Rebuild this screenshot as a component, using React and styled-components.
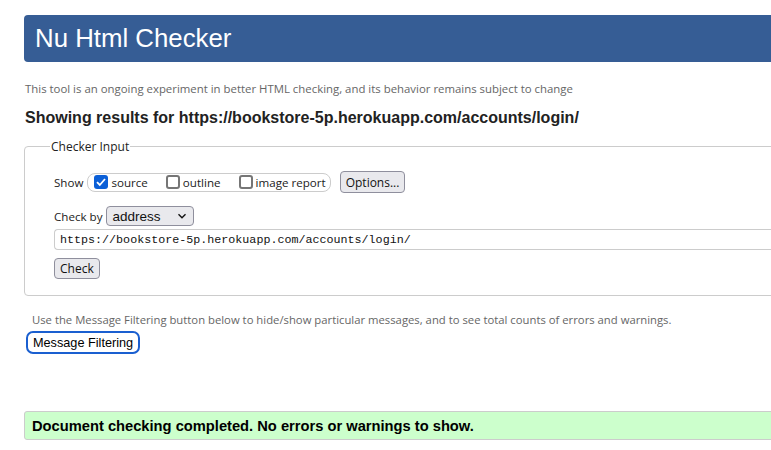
import React from 'react';
import styled, { createGlobalStyle } from 'styled-components';

const Global = createGlobalStyle`
  html, body { margin:0; padding:0; background:#fff; overflow:hidden; }
  body { font-family: "Open Sans", "Noto Sans", sans-serif; }
`

const Page = styled.div`
  width:1000px;
  padding:15px 0 0 24px;
`

const Header = styled.div`
  height:47px;
  background:#365d95;
  border-radius:4px;
  padding-left:11px;
  display:flex;
  align-items:center;
`

const Title = styled.h1`
  margin:0;
  font-family:"Liberation Sans", Arial, sans-serif;
  font-weight:normal;
  font-size:25.8px;
  color:#fff;
`

const Intro = styled.p`
  margin:19px 0 0 1px;
  font-size:11.4px;
  color:#666;
  line-height:16px;
`

const Results = styled.h2`
  margin:11px 0 0 1px;
  font-family:"Liberation Sans", Arial, sans-serif;
  font-size:16px;
  font-weight:bold;
  color:#222;
  line-height:20px;
`

const Fieldset = styled.fieldset`
  margin:10px 0 0 0;
  border:1px solid #ccc;
  border-radius:4px;
  padding:6px 0 16px 29px;
`

const Legend = styled.legend`
  margin-left:-4px;
  padding:0 1px;
  font-size:12px;
  color:#222;
`

const Row = styled.div`
  display:flex;
  align-items:center;
  font-size:11.6px;
  color:#222;
  margin-top:${p => p.$mt || 0}px;
`

const Label = styled.span`
  margin-right:4px;
`

const Group = styled.div`
  display:flex;
  align-items:center;
  height:17px;
  border:1px solid #ccc;
  border-radius:8px;
  padding:0 4px 0 6px;
  margin-right:9px;
`

const Option = styled.label`
  display:flex;
  align-items:center;
  margin-right:${p => p.$gap || 0}px;
`

const Box = styled.span`
  width:14px;
  height:14px;
  box-sizing:border-box;
  border-radius:3px;
  margin-right:3px;
  display:flex;
  align-items:center;
  justify-content:center;
  background:${p => (p.$on ? '#0b5fd7' : '#fff')};
  border:${p => (p.$on ? 'none' : '2px solid #767676')};
`

const Button = styled.button`
  font-family:"Open Sans", "Noto Sans", sans-serif;
  font-size:12px;
  color:#111;
  background:#e9e9ed;
  border:1px solid #8f8f9d;
  border-radius:4px;
  padding:0 5px;
  height:${p => p.$h || 21}px;
`

const Select = styled.div`
  display:flex;
  align-items:center;
  justify-content:space-between;
  width:88px;
  height:20px;
  box-sizing:border-box;
  background:#e9e9ed;
  border:1px solid #8f8f9d;
  border-radius:4px;
  padding:0 6px 0 5px;
  font-family:"Liberation Sans", Arial, sans-serif;
  font-size:13.5px;
  color:#111;
`

const UrlInput = styled.div`
  height:21px;
  box-sizing:border-box;
  border:1px solid #ccc;
  border-right:none;
  border-radius:4px 0 0 4px;
  padding-left:5px;
  display:flex;
  align-items:center;
  font-family:"Liberation Mono", monospace;
  font-size:11.7px;
  color:#111;
  margin-top:3px;
`

const Note = styled.p`
  margin:16px 0 0 8px;
  font-size:11.3px;
  color:#666;
  line-height:16px;
`

const FilterButton = styled.button`
  margin:3px 0 0 2px;
  height:23px;
  padding:0 5px;
  background:#fff;
  border:2px solid #1a5fd0;
  border-radius:7px;
  font-family:"Liberation Sans", Arial, sans-serif;
  font-size:12.7px;
  color:#000;
`

const Success = styled.div`
  margin-top:57px;
  height:29px;
  box-sizing:border-box;
  background:#ccffcc;
  border:1px solid #ccc;
  border-radius:3px;
  padding-left:7px;
  display:flex;
  align-items:center;
  font-family:"Liberation Sans", Arial, sans-serif;
  font-weight:bold;
  font-size:14.7px;
  color:#000;
`

const Check = () => (
  <svg width="12" height="12" viewBox="0 0 12 12">
    <path d="M2 6.2 L4.8 9 L10 3" fill="none" stroke="#fff" strokeWidth="1.8" />
  </svg>
)

const Chevron = () => (
  <svg width="10" height="10" viewBox="0 0 10 10">
    <path d="M1.5 3.2 L5 6.7 L8.5 3.2" fill="none" stroke="#111" strokeWidth="1.4" />
  </svg>
)

const App = () => {
  return (
    <Page>
      <Global />
      <Header>
        <Title>Nu Html Checker</Title>
      </Header>
      <Intro>This tool is an ongoing experiment in better HTML checking, and its behavior remains subject to change</Intro>
      <Results>Showing results for https://bookstore-5p.herokuapp.com/accounts/login/</Results>
      <Fieldset>
        <Legend>Checker Input</Legend>
        <Row $mt={10}>
          <Label>Show</Label>
          <Group>
            <Option $gap={18}><Box $on><Check /></Box>source</Option>
            <Option $gap={18}><Box />outline</Option>
            <Option><Box />image report</Option>
          </Group>
          <Button $h={22}>Options...</Button>
        </Row>
        <Row $mt={13}>
          <Label>Check by</Label>
          <Select>address<Chevron /></Select>
        </Row>
        <UrlInput>https://bookstore-5p.herokuapp.com/accounts/login/</UrlInput>
        <Row $mt={8}>
          <Button $h={21}>Check</Button>
        </Row>
      </Fieldset>
      <Note>Use the Message Filtering button below to hide/show particular messages, and to see total counts of errors and warnings.</Note>
      <FilterButton>Message Filtering</FilterButton>
      <Success>Document checking completed. No errors or warnings to show.</Success>
    </Page>
  )
}

export default App
